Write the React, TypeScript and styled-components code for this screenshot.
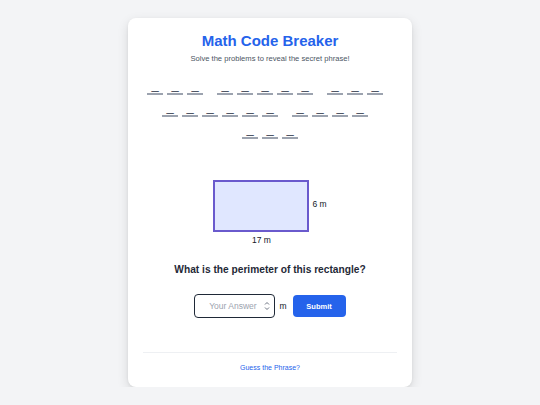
import React from "react";
import styled, { createGlobalStyle } from "styled-components";

const GlobalStyle = createGlobalStyle`
  html, body {
    margin: 0;
    padding: 0;
    background: #f3f4f6;
    font-family: "Liberation Sans", Arial, Helvetica, sans-serif;
  }
`;

// phrase word lengths, letters hidden
const words: number[] = [3, 5, 3, 6, 4, 3];

const Page = styled.div`
  padding-top: 18px;
  display: flex;
  justify-content: center;
`;

const Card = styled.div`
  width: 284px;
  box-sizing: border-box;
  background: #fff;
  border-radius: 8px;
  box-shadow: 0 4px 12px rgba(0, 0, 0, 0.12), 0 1px 3px rgba(0, 0, 0, 0.06);
  padding: 14px 15px 14px;
  display: flex;
  flex-direction: column;
  align-items: center;
`;

const Title = styled.h1`
  margin: 0;
  font-size: 15px;
  line-height: 18px;
  font-weight: 700;
  color: #2563eb;
`;

const Subtitle = styled.p`
  margin: 4px 0 0;
  font-size: 7.6px;
  line-height: 10px;
  color: #4b5563;
`;

const Phrase = styled.div`
  margin-top: 14px;
  width: 100%;
  display: flex;
  flex-wrap: wrap;
  justify-content: center;
  row-gap: 5px;
`;

const Word = styled.div`
  display: flex;
`;

const Space = styled.div`
  width: 10px;
`;

const Slot = styled.span`
  width: 16px;
  height: 17px;
  margin: 0 2px;
  box-sizing: border-box;
  border-bottom: 2px solid #9ca3af;
  text-align: center;
  font-size: 13px;
  line-height: 13px;
  color: #374151;
`;

const Figure = styled.div`
  margin-top: 41px;
  display: flex;
  align-items: flex-start;
  gap: 3px;
`;

const ShapeColumn = styled.div`
  display: flex;
  flex-direction: column;
  align-items: center;
`;

const Rect = styled.div`
  width: 96px;
  height: 52px;
  box-sizing: border-box;
  background: #e0e7ff;
  border: 2px solid #6a5acd;
`;

const Label = styled.span<{ $side?: boolean }>`
  font-size: 8.5px;
  line-height: 10px;
  color: #111827;
  margin-top: ${(p) => (p.$side ? "19px" : "3px")};
`;

const Question = styled.h2`
  margin: 18px 0 0;
  font-size: 10.2px;
  line-height: 14px;
  font-weight: 700;
  color: #1f2937;
`;

const AnswerRow = styled.div`
  margin-top: 17px;
  display: flex;
  align-items: center;
  gap: 4px;
`;

const InputBox = styled.div`
  width: 81px;
  height: 24px;
  box-sizing: border-box;
  border: 1.5px solid #1f2937;
  border-radius: 4px;
  display: flex;
  align-items: center;
  padding: 0 4px 0 6px;
`;

const Input = styled.input`
  flex: 1;
  min-width: 0;
  border: none;
  outline: none;
  background: transparent;
  font-family: inherit;
  font-size: 8.5px;
  text-align: center;
  color: #111827;
  padding: 0;

  &::placeholder {
    color: #9ca3af;
  }
`;

const Spinner = styled.svg`
  width: 6px;
  height: 10px;
  flex-shrink: 0;
`;

const Unit = styled.span`
  font-size: 8.5px;
  color: #111827;
`;

const SubmitButton = styled.button`
  margin-left: 2px;
  height: 22px;
  width: 53px;
  border: none;
  border-radius: 4px;
  background: #2563eb;
  color: #fff;
  font-family: inherit;
  font-size: 7.5px;
  font-weight: 700;
  cursor: pointer;
`;

const Divider = styled.div`
  margin-top: 34px;
  width: 100%;
  border-top: 1px solid #eef0f3;
`;

const GuessLink = styled.a`
  margin-top: 10px;
  font-size: 7px;
  line-height: 10px;
  color: #2563eb;
  text-decoration: none;
  cursor: pointer;
`;

const App: React.FC = () => {
  return (
    <>
      <GlobalStyle />
      <Page>
        <Card>
          <Title>Math Code Breaker</Title>
          <Subtitle>Solve the problems to reveal the secret phrase!</Subtitle>
          <Phrase>
            {words.map((len, i) => (
              <React.Fragment key={i}>
                {i > 0 && <Space />}
                <Word>
                  {Array.from({ length: len }).map((_, j) => (
                    <Slot key={j}>_</Slot>
                  ))}
                </Word>
              </React.Fragment>
            ))}
          </Phrase>
          <Figure>
            <ShapeColumn>
              <Rect />
              <Label>17 m</Label>
            </ShapeColumn>
            <Label $side>6 m</Label>
          </Figure>
          <Question>What is the perimeter of this rectangle?</Question>
          <AnswerRow>
            <InputBox>
              <Input type="text" placeholder="Your Answer" />
              <Spinner viewBox="0 0 6 10">
                <path d="M1 3.5 L3 1.5 L5 3.5" fill="none" stroke="#6b7280" strokeWidth="1" />
                <path d="M1 6.5 L3 8.5 L5 6.5" fill="none" stroke="#6b7280" strokeWidth="1" />
              </Spinner>
            </InputBox>
            <Unit>m</Unit>
            <SubmitButton>Submit</SubmitButton>
          </AnswerRow>
          <Divider />
          <GuessLink>Guess the Phrase?</GuessLink>
        </Card>
      </Page>
    </>
  );
};

export default App;
